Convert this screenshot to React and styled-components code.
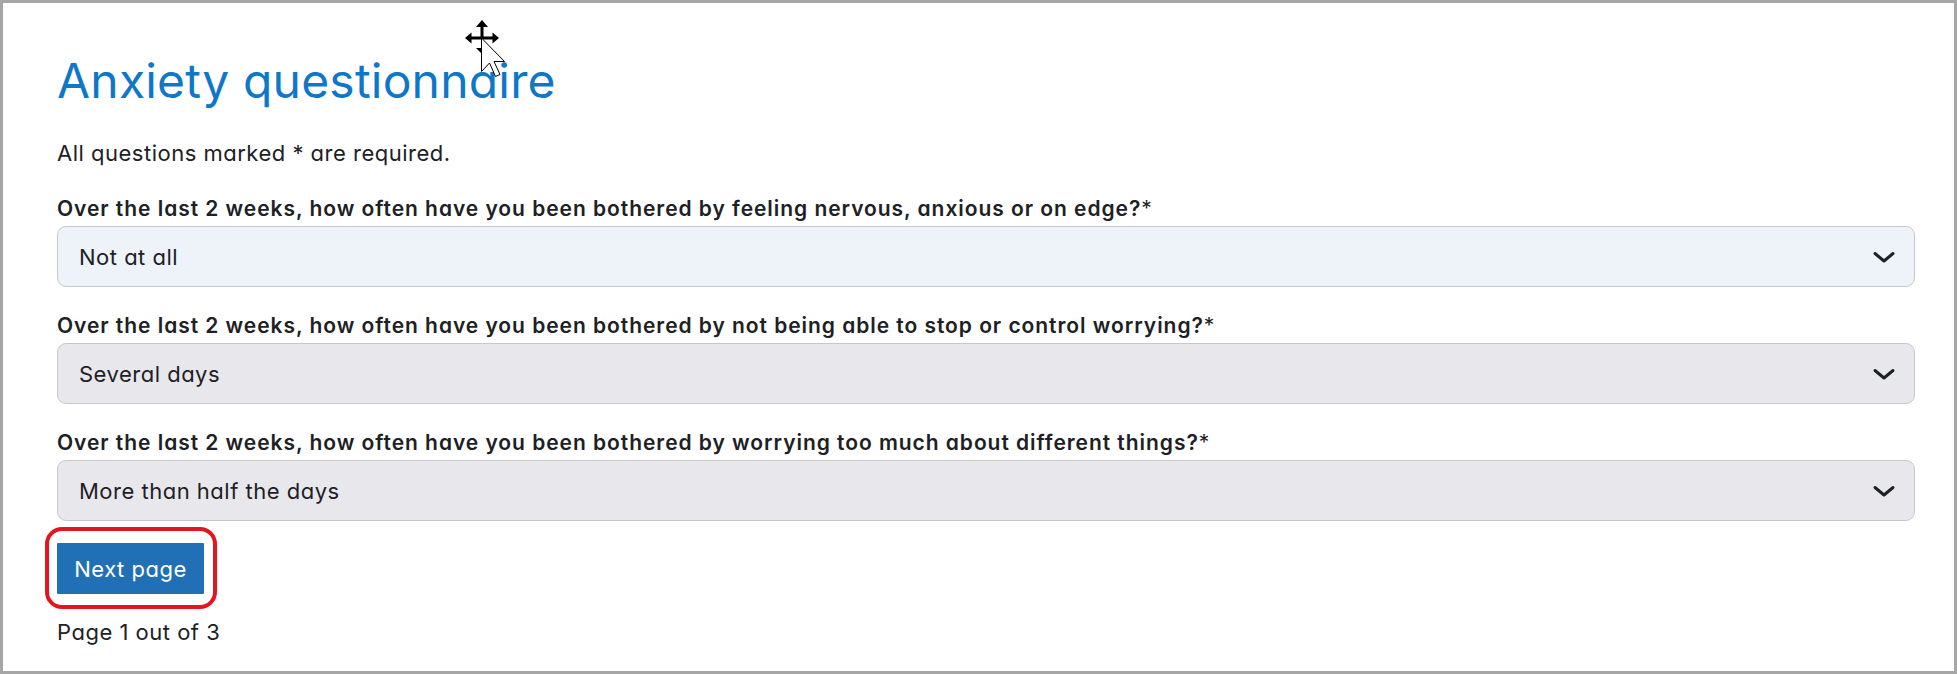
import React from "react";
import styled, { createGlobalStyle } from "styled-components";

const GlobalStyle = createGlobalStyle`
  html, body {
    margin: 0;
    padding: 0;
    height: 100%;
    background: #ffffff;
  }
  body {
    font-family: "Inter", "Open Sans", sans-serif;
    font-feature-settings: "cv11";
  }
`;

/* ------------------ FRAME ------------------ */
const Frame = styled.div`
  position: relative;
  box-sizing: border-box;
  height: 674px;
  border: 3px solid #a6a6a6;
  padding: 49px 39px 0 54px;
  color: #1d2125;
  overflow: hidden;
`;

const Title = styled.h2`
  margin: 0;
  font-size: 48px;
  font-weight: 400;
  line-height: 58px;
  letter-spacing: 0.2px;
  color: #0e77c8;
`;

const Text = styled.p`
  margin: ${({ $top }) => $top}px 0 0;
  font-size: 22px;
  line-height: 33px;
  letter-spacing: 0.5px;
`;

/* ------------------ QUESTIONS ------------------ */
const Question = styled.div`
  margin-top: 24px;
`;

const Label = styled.label`
  display: block;
  margin-bottom: 2px;
  font-size: 21px;
  font-weight: 600;
  line-height: 30px;
  letter-spacing: 0.95px;

  span {
    font-weight: 400;
  }
`;

const SelectWrap = styled.div`
  position: relative;
`;

const Select = styled.select`
  appearance: none;
  display: block;
  box-sizing: border-box;
  width: 100%;
  height: 61px;
  margin: 0;
  padding: 0 54px 0 21px;
  border: 1.5px solid #c6c8cc;
  border-radius: 9px;
  background: ${({ $active }) => ($active ? "#eef3fa" : "#e8e8ec")};
  font-family: inherit;
  font-feature-settings: "cv11";
  font-size: 22px;
  letter-spacing: 0.5px;
  color: #1d2125;
  outline: none;
`;

const Chevron = styled.svg`
  position: absolute;
  right: 19px;
  top: 50%;
  transform: translateY(-50%);
  pointer-events: none;
`;

/* ------------------ BUTTON ------------------ */
const ButtonRow = styled.div`
  margin-top: 22px;
`;

const ButtonWrap = styled.div`
  position: relative;
  display: inline-block;
`;

const Button = styled.button`
  display: block;
  width: 147px;
  height: 51px;
  padding: 0;
  border: none;
  border-radius: 1px;
  background: #2170b5;
  color: #ffffff;
  font-family: inherit;
  font-feature-settings: "cv11";
  font-size: 22px;
  letter-spacing: 0.5px;
`;

const Highlight = styled.span`
  position: absolute;
  left: -12px;
  top: -16px;
  right: -13px;
  bottom: -15px;
  border: 4px solid #e3161f;
  border-radius: 17px;
  pointer-events: none;
`;

const Cursor = styled.svg`
  position: absolute;
  left: 457px;
  top: 12px;
`;

const questions = [
  {
    text: "Over the last 2 weeks, how often have you been bothered by feeling nervous, anxious or on edge?",
    value: "Not at all",
    active: true,
  },
  {
    text: "Over the last 2 weeks, how often have you been bothered by not being able to stop or control worrying?",
    value: "Several days",
  },
  {
    text: "Over the last 2 weeks, how often have you been bothered by worrying too much about different things?",
    value: "More than half the days",
  },
];

const options = ["Not at all", "Several days", "More than half the days", "Nearly every day"];

const ChevronIcon = () => (
  <Chevron width="24" height="14" viewBox="0 0 24 14">
    <path
      d="M3 3.5 L12 11 L21 3.5"
      fill="none"
      stroke="#1d2125"
      strokeWidth="3"
      strokeLinecap="round"
      strokeLinejoin="round"
    />
  </Chevron>
);

const App = () => {
  return (
    <>
      <GlobalStyle />
      <Frame>
        <Title>Anxiety questionnaire</Title>
        <Text $top={27}>All questions marked * are required.</Text>

        {questions.map((q, i) => (
          <Question key={i}>
            <Label htmlFor={`q${i}`}>
              {q.text}
              <span>*</span>
            </Label>
            <SelectWrap>
              <Select id={`q${i}`} defaultValue={q.value} $active={q.active}>
                {options.map((o) => (
                  <option key={o}>{o}</option>
                ))}
              </Select>
              <ChevronIcon />
            </SelectWrap>
          </Question>
        ))}

        <ButtonRow>
          <ButtonWrap>
            <Button>Next page</Button>
            <Highlight />
          </ButtonWrap>
        </ButtonRow>

        <Text $top={22}>Page 1 out of 3</Text>

        {/* screen-captured mouse cursor */}
        <Cursor width="50" height="70" viewBox="457 15 50 70">
          <g fill="#000">
            <path d="M479 20 L485 27 L480.5 27 L480.5 38 L477.5 38 L477.5 27 L473 27 Z" />
            <path d="M462 38 L468.5 32.5 L468.5 36.5 L479 36.5 L479 39.5 L468.5 39.5 L468.5 43.5 Z" />
            <path d="M496 38 L489.5 32.5 L489.5 36.5 L479 36.5 L479 39.5 L489.5 39.5 L489.5 43.5 Z" />
            <path d="M473 48 L479 48 L479 54 Z" />
          </g>
          <path
            d="M478.5 38 L478.5 71.5 L486.5 63 L492.5 76.5 L497 74.5 L491 61.5 L501.5 61.5 Z"
            fill="#fff"
            stroke="#000"
            strokeWidth="1"
            strokeLinejoin="miter"
          />
        </Cursor>
      </Frame>
    </>
  );
};

export default App;
